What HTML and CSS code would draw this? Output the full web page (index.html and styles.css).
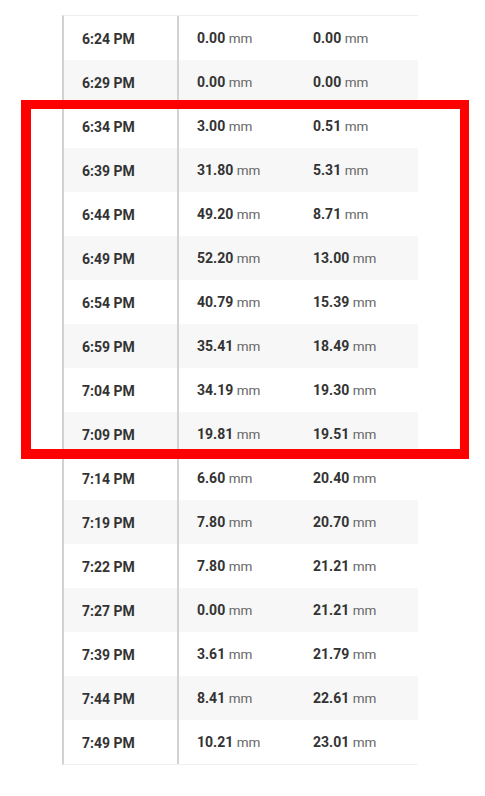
FILE: index.html
```html
<!DOCTYPE html>
<html>
<head>
<meta charset="utf-8">
<link rel="stylesheet" href="styles.css">
</head>
<body>
<div class="page">
  <div class="table">
    <div class="row"><div class="time">6:24 PM</div><div class="val"><b>0.00</b> <span>mm</span></div><div class="val"><b>0.00</b> <span>mm</span></div></div>
    <div class="row"><div class="time">6:29 PM</div><div class="val"><b>0.00</b> <span>mm</span></div><div class="val"><b>0.00</b> <span>mm</span></div></div>
    <div class="row"><div class="time">6:34 PM</div><div class="val"><b>3.00</b> <span>mm</span></div><div class="val"><b>0.51</b> <span>mm</span></div></div>
    <div class="row"><div class="time">6:39 PM</div><div class="val"><b>31.80</b> <span>mm</span></div><div class="val"><b>5.31</b> <span>mm</span></div></div>
    <div class="row"><div class="time">6:44 PM</div><div class="val"><b>49.20</b> <span>mm</span></div><div class="val"><b>8.71</b> <span>mm</span></div></div>
    <div class="row"><div class="time">6:49 PM</div><div class="val"><b>52.20</b> <span>mm</span></div><div class="val"><b>13.00</b> <span>mm</span></div></div>
    <div class="row"><div class="time">6:54 PM</div><div class="val"><b>40.79</b> <span>mm</span></div><div class="val"><b>15.39</b> <span>mm</span></div></div>
    <div class="row"><div class="time">6:59 PM</div><div class="val"><b>35.41</b> <span>mm</span></div><div class="val"><b>18.49</b> <span>mm</span></div></div>
    <div class="row"><div class="time">7:04 PM</div><div class="val"><b>34.19</b> <span>mm</span></div><div class="val"><b>19.30</b> <span>mm</span></div></div>
    <div class="row"><div class="time">7:09 PM</div><div class="val"><b>19.81</b> <span>mm</span></div><div class="val"><b>19.51</b> <span>mm</span></div></div>
    <div class="row"><div class="time">7:14 PM</div><div class="val"><b>6.60</b> <span>mm</span></div><div class="val"><b>20.40</b> <span>mm</span></div></div>
    <div class="row"><div class="time">7:19 PM</div><div class="val"><b>7.80</b> <span>mm</span></div><div class="val"><b>20.70</b> <span>mm</span></div></div>
    <div class="row"><div class="time">7:22 PM</div><div class="val"><b>7.80</b> <span>mm</span></div><div class="val"><b>21.21</b> <span>mm</span></div></div>
    <div class="row"><div class="time">7:27 PM</div><div class="val"><b>0.00</b> <span>mm</span></div><div class="val"><b>21.21</b> <span>mm</span></div></div>
    <div class="row"><div class="time">7:39 PM</div><div class="val"><b>3.61</b> <span>mm</span></div><div class="val"><b>21.79</b> <span>mm</span></div></div>
    <div class="row"><div class="time">7:44 PM</div><div class="val"><b>8.41</b> <span>mm</span></div><div class="val"><b>22.61</b> <span>mm</span></div></div>
    <div class="row"><div class="time">7:49 PM</div><div class="val"><b>10.21</b> <span>mm</span></div><div class="val"><b>23.01</b> <span>mm</span></div></div>
  </div>
  <div class="highlight"></div>
</div>
</body>
</html>
```

FILE: styles.css
```css
html, body {
  margin: 0;
  padding: 0;
  background: #fff;
}
body {
  font-family: Roboto, "Liberation Sans", sans-serif;
  color: #333;
}
.page {
  position: relative;
  width: 485px;
  height: 796px;
  padding-top: 15px;
  box-sizing: border-box;
}
.table {
  margin-left: 62px;
  width: 356px;
  border-top: 1px solid #eeeeee;
  border-left: 2px solid #d2d2d2;
  border-bottom: 1px solid #f0f0f0;
  box-sizing: border-box;
}
.row {
  display: grid;
  grid-template-columns: 115px 116px 1fr;
  height: 44px;
  align-items: center;
}
.row:nth-child(even) {
  background: #f7f7f7;
}
.time {
  height: 100%;
  display: flex;
  align-items: center;
  padding-left: 18px;
  padding-top: 2px;
  box-sizing: border-box;
  border-right: 2px solid #d2d2d2;
  font-weight: 700;
  font-size: 14px;
  color: #333;
}
.val {
  padding-left: 18px;
  padding-bottom: 1px;
  font-size: 14px;
  white-space: nowrap;
}
.val b {
  font-weight: 700;
  color: #333;
}
.val span {
  font-size: 13.5px;
  color: #666;
}
.highlight {
  position: absolute;
  left: 21px;
  top: 100px;
  width: 448px;
  height: 359px;
  border-style: solid;
  border-color: #ff0000;
  border-width: 9px 9px 10px 10px;
  box-sizing: border-box;
}
```
